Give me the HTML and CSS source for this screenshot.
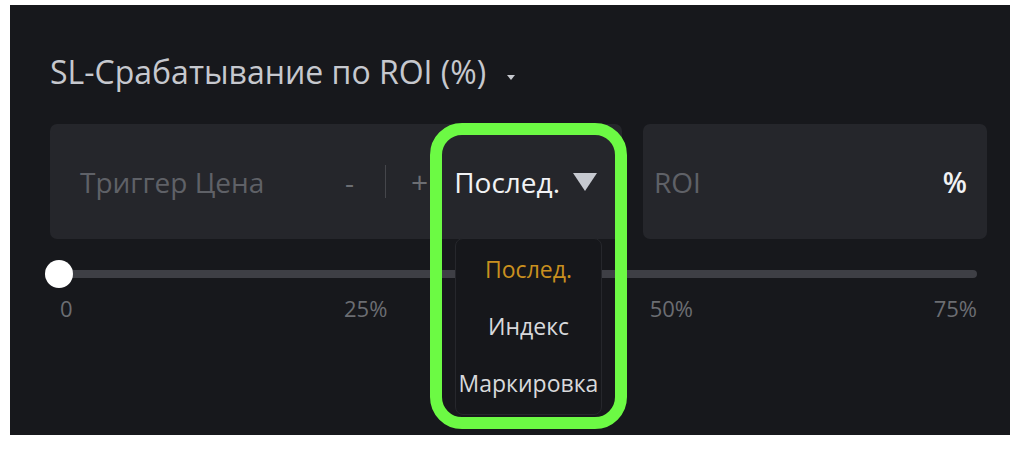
FILE: index.html
```html
<!DOCTYPE html>
<html lang="ru">
<head>
<meta charset="utf-8">
<title>SL</title>
<link rel="stylesheet" href="styles.css">
</head>
<body>
<div class="panel">
  <div class="title">SL-Срабатывание по ROI (%)<span class="caret"></span></div>
  <div class="row">
    <div class="field trigger">
      <span class="placeholder">Триггер Цена</span>
      <span class="step minus">-</span>
      <span class="sep"></span>
      <span class="step plus">+</span>
      <span class="select">Послед.<span class="tri"></span></span>
      <div class="menu">
        <div class="item active">Послед.</div>
        <div class="item">Индекс</div>
        <div class="item">Маркировка</div>
      </div>
      <div class="highlight"></div>
    </div>
    <div class="field roi">
      <span class="placeholder">ROI</span>
      <span class="unit">%</span>
    </div>
  </div>
  <div class="slider">
    <div class="track-wrap">
      <div class="track"></div>
      <div class="thumb"></div>
    </div>
    <div class="labels">
      <span class="l0">0</span>
      <span class="l1">25%</span>
      <span class="l2">50%</span>
      <span class="l3">75%</span>
    </div>
  </div>
</div>
</body>
</html>
```

FILE: styles.css
```css
html, body {
  margin: 0;
  background: #ffffff;
}
body {
  font-family: "Open Sans", "Noto Sans", sans-serif;
}
.panel {
  margin: 5px 0 0 10px;
  width: 1000px;
  height: 430px;
  box-sizing: border-box;
  padding: 46px 23px 0 40px;
  background: #17181c;
}
.title {
  font-size: 32px;
  line-height: 42px;
  color: #c6c8ce;
  display: flex;
  align-items: center;
}
.caret {
  width: 0;
  height: 0;
  margin: 10px 0 0 21px;
  border-left: 4px solid transparent;
  border-right: 4px solid transparent;
  border-top: 5px solid #c6c8ce;
}
.row {
  margin-top: 31px;
  display: flex;
  gap: 21px;
}
.field {
  height: 115px;
  border-radius: 7px;
  background: #25262b;
  display: flex;
  align-items: center;
  font-size: 28px;
  line-height: 38px;
  box-sizing: border-box;
}
.trigger {
  position: relative;
  width: 572px;
  padding: 0 25px 0 30px;
}
.roi {
  width: 344px;
  padding: 0 20px 0 11px;
}
.placeholder {
  color: #5f6167;
  flex: 1;
}
.step {
  color: #6c6e73;
}
.minus {
  margin-right: 31px;
}
.sep {
  width: 1px;
  height: 33px;
  background: #45464b;
  margin-right: 25px;
}
.plus {
  margin-right: 26px;
  font-size: 30px;
}
.select {
  color: #f1f2f4;
  font-size: 28px;
  display: flex;
  align-items: center;
}
.tri {
  width: 0;
  height: 0;
  margin-left: 13px;
  border-left: 12px solid transparent;
  border-right: 12px solid transparent;
  border-top: 18px solid #c6c9d0;
}
.unit {
  color: #f1f2f4;
  font-weight: 600;
}
.menu {
  position: absolute;
  left: 405px;
  top: 114px;
  width: 147px;
  height: 177px;
  box-sizing: border-box;
  padding-top: 2px;
  background: #16171b;
  border: 1px solid #26272c;
  border-radius: 8px;
  z-index: 2;
}
.item {
  font-size: 23px;
  line-height: 57px;
  text-align: center;
  color: #d8d9dc;
  white-space: nowrap;
}
.item.active {
  color: #c9901f;
}
.highlight {
  position: absolute;
  left: 380px;
  top: -1px;
  width: 197px;
  height: 306px;
  box-sizing: border-box;
  border: 12px solid #6cfa44;
  border-radius: 32px;
  z-index: 3;
}
.slider {
  margin: 21px 10px 0 10px;
}
.track-wrap {
  position: relative;
  height: 28px;
  display: flex;
  align-items: center;
}
.track {
  flex: 1;
  height: 8px;
  border-radius: 4px;
  background: #3e3f45;
}
.thumb {
  position: absolute;
  left: -15px;
  top: 0;
  width: 28px;
  height: 28px;
  border-radius: 50%;
  background: #ffffff;
}
.labels {
  margin-top: 5px;
  display: grid;
  grid-template-columns: repeat(6, 1fr);
  font-size: 22px;
  line-height: 30px;
  color: #6b6d72;
}
.l0 { grid-column: 1; }
.l1 { grid-column: 2 / 4; text-align: center; }
.l2 { grid-column: 4 / 6; text-align: center; }
.l3 { grid-column: 6; text-align: right; }
```
